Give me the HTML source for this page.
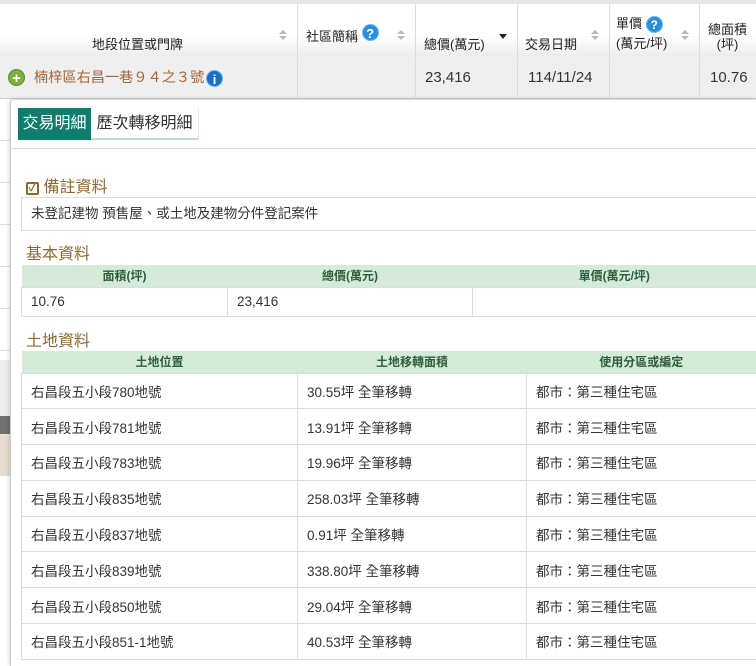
<!DOCTYPE html>
<html><head><meta charset="utf-8">
<style>
*{box-sizing:border-box;margin:0;padding:0}
body{width:756px;height:666px;overflow:hidden;background:#fff;font-family:"Liberation Sans","Noto Sans CJK TC",sans-serif;position:relative;color:#333}
.abs{position:absolute}
.hd{position:absolute;top:4px;height:53px;background:linear-gradient(#fff,#fff 60%,#ececec);border-right:1px solid #ddd;font-size:13px;color:#222}
.srt{position:absolute;right:10px;top:26px;width:8px;height:12px}
.srt:before{content:"";position:absolute;left:0;top:0;border:4px solid transparent;border-bottom:4px solid #bbb;border-top:0}
.srt:after{content:"";position:absolute;left:0;top:6px;border:4px solid transparent;border-top:4px solid #bbb;border-bottom:0}
.q{display:inline-block;width:17px;height:17px;border-radius:50%;background:#2a8fd8;color:#fff;font-size:13px;font-weight:bold;text-align:center;line-height:17px;border:1px solid #6bb8ee;vertical-align:middle}
.dc{position:absolute;top:57px;height:42px;background:#efefef;border-right:1px solid #ddd;border-bottom:1px solid #ccc;font-size:15px;line-height:42px;color:#333}
.title{position:absolute;left:26px;font-size:16px;color:#8b6a2e}
table{position:absolute;border-collapse:collapse;left:21px;width:735px;font-size:13px}
th{background:#d5ebda;color:#2d5d3a;font-weight:bold;height:22px;font-size:12px;text-align:center}
td{border:1px solid #ddd;padding-left:9px;color:#333;font-size:13.5px}
</style></head><body>
<div class="abs" style="left:0;top:0;width:756px;height:4px;background:#e6e6e6"></div>
<div class="hd" style="left:0;width:298px"><div class="abs" style="left:92px;top:30px">地段位置或門牌</div><div class="srt"></div></div>
<div class="hd" style="left:298px;width:118px"><div class="abs" style="left:8px;top:22px">社區簡稱 <span class="q" style="position:relative;top:-5px">?</span></div><div class="srt"></div></div>
<div class="hd" style="left:416px;width:102px"><div class="abs" style="left:8px;top:30px">總價(萬元)</div><div class="abs" style="right:10px;top:30px;border:4px solid transparent;border-top:5px solid #222;border-bottom:0"></div></div>
<div class="hd" style="left:518px;width:92px"><div class="abs" style="left:7px;top:30px">交易日期</div><div class="srt"></div></div>
<div class="hd" style="left:610px;width:90px"><div class="abs" style="left:6px;top:10px;line-height:20px">單價 <span class="q" style="font-size:12px">?</span><br>(萬元/坪)</div><div class="srt"></div></div>
<div class="hd" style="left:700px;width:56px;border-right:0"><div class="abs" style="left:8px;top:18px;line-height:15px;text-align:center">總面積<br>(坪)</div></div>

<div class="dc" style="left:0;width:298px"><span class="abs" style="left:8px;top:12px;width:17px;height:17px;border-radius:50%;background:#7bb13e;color:#fff;font-weight:bold;line-height:17px;text-align:center;font-size:15px;border:1px solid #5d8f2a">+</span><span class="abs" style="left:34px;color:#a5653a;font-size:14.2px">楠梓區右昌一巷９４之３號</span><span class="q abs" style="left:206px;top:13px;background:#1a6fc0">i</span></div>
<div class="dc" style="left:298px;width:118px"></div>
<div class="dc" style="left:416px;width:102px;padding-left:9px">23,416</div>
<div class="dc" style="left:518px;width:92px;padding-left:10px">114/11/24</div>
<div class="dc" style="left:610px;width:90px"></div>
<div class="dc" style="left:700px;width:56px;padding-left:10px;border-right:0">10.76</div>

<div class="abs" style="left:0;top:99px;width:10px;height:260px;background:#fff"></div>
<div class="abs" style="left:0;top:140px;width:10px;height:1px;background:#ddd"></div>
<div class="abs" style="left:0;top:182px;width:10px;height:1px;background:#ddd"></div>
<div class="abs" style="left:0;top:224px;width:10px;height:1px;background:#ddd"></div>
<div class="abs" style="left:0;top:266px;width:10px;height:1px;background:#ddd"></div>
<div class="abs" style="left:0;top:308px;width:10px;height:1px;background:#ddd"></div>
<div class="abs" style="left:0;top:350px;width:10px;height:1px;background:#ddd"></div>
<div class="abs" style="left:0;top:360px;width:10px;height:56px;background:#eee"></div>
<div class="abs" style="left:0;top:416px;width:10px;height:18px;background:#707070"></div>
<div class="abs" style="left:0;top:434px;width:10px;height:42px;background:#e6ddd0"></div>

<div class="abs" style="left:10px;top:99px;width:746px;height:567px;background:#fff;border-left:1px solid #ccc;border-top:1px solid #ddd;box-shadow:-1px 0 4px rgba(0,0,0,.15);border-top-left-radius:4px"></div>
<div class="abs" style="left:18px;top:108px;width:73px;height:32px;background:#0f7d6c;color:#fff;font-size:16px;line-height:32px;text-align:center">交易明細</div>
<div class="abs" style="left:91px;top:108px;width:108px;height:32px;border-bottom:2px solid #b8ddd6;border-right:1px solid #e6e6e6;color:#333;font-size:16px;line-height:32px;text-align:center">歷次轉移明細</div>
<div class="abs" style="left:11px;top:148px;width:745px;height:1px;background:#ddd"></div>

<div class="title" style="top:173px"><span style="display:inline-block;width:13px;height:13px;border:2px solid #8b6a2e;border-radius:2px;font-size:11px;line-height:9px;text-align:center;font-weight:bold;vertical-align:1px">✓</span> 備註資料</div>
<div class="abs" style="left:21px;top:197px;width:735px;height:34px;border:1px solid #ddd;border-right:0;font-size:13.5px;line-height:32px;padding-left:9px;color:#333">未登記建物 預售屋、或土地及建物分件登記案件</div>

<div class="title" style="top:240px">基本資料</div>
<table style="top:265px">
<tr><th style="width:206px">面積(坪)</th><th style="width:245px">總價(萬元)</th><th>單價(萬元/坪)</th></tr>
<tr style="height:29px"><td>10.76</td><td>23,416</td><td style="border-right:0"></td></tr>
</table>

<div class="title" style="top:327px">土地資料</div>
<table style="top:351px">
<tr><th style="width:276px">土地位置</th><th style="width:229px">土地移轉面積</th><th>使用分區或編定</th></tr>
<tr style="height:35.8px"><td>右昌段五小段780地號</td><td>30.55坪 全筆移轉</td><td style="border-right:0">都市：第三種住宅區</td></tr>
<tr style="height:35.8px"><td>右昌段五小段781地號</td><td>13.91坪 全筆移轉</td><td style="border-right:0">都市：第三種住宅區</td></tr>
<tr style="height:35.8px"><td>右昌段五小段783地號</td><td>19.96坪 全筆移轉</td><td style="border-right:0">都市：第三種住宅區</td></tr>
<tr style="height:35.8px"><td>右昌段五小段835地號</td><td>258.03坪 全筆移轉</td><td style="border-right:0">都市：第三種住宅區</td></tr>
<tr style="height:35.8px"><td>右昌段五小段837地號</td><td>0.91坪 全筆移轉</td><td style="border-right:0">都市：第三種住宅區</td></tr>
<tr style="height:35.8px"><td>右昌段五小段839地號</td><td>338.80坪 全筆移轉</td><td style="border-right:0">都市：第三種住宅區</td></tr>
<tr style="height:35.8px"><td>右昌段五小段850地號</td><td>29.04坪 全筆移轉</td><td style="border-right:0">都市：第三種住宅區</td></tr>
<tr style="height:35.8px"><td>右昌段五小段851-1地號</td><td>40.53坪 全筆移轉</td><td style="border-right:0">都市：第三種住宅區</td></tr>
</table>
</body></html>
